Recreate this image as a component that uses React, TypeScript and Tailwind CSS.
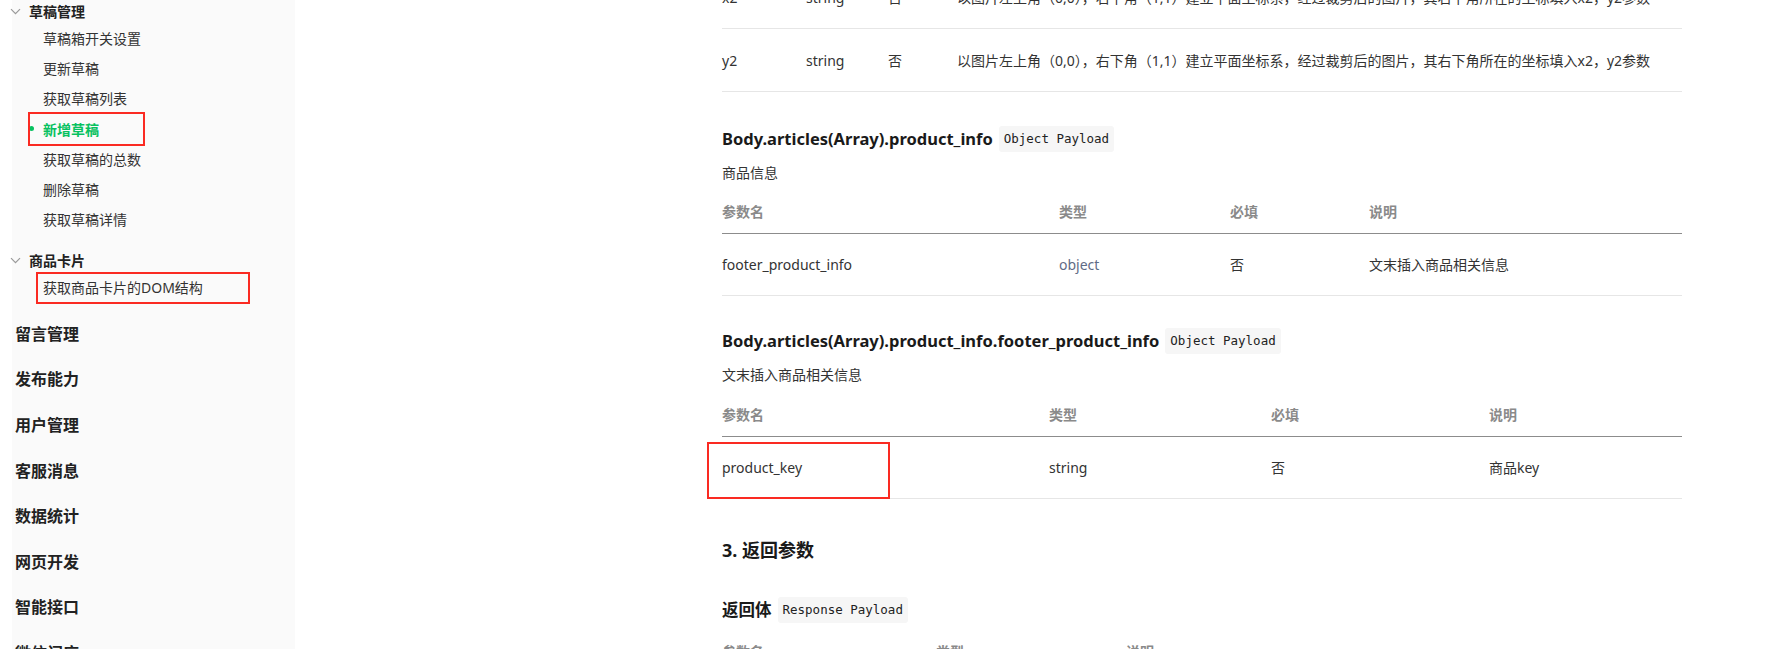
import React from 'react';

const subDrafts = ['草稿箱开关设置', '更新草稿', '获取草稿列表', '新增草稿', '获取草稿的总数', '删除草稿', '获取草稿详情'];
const topItems = ['留言管理', '发布能力', '用户管理', '客服消息', '数据统计', '网页开发', '智能接口', '微信门店'];

const Chevron = () => (
  <svg width="11" height="7" viewBox="0 0 11 7" className="shrink-0">
    <path d="M1 1.2l4.5 4.5 4.5-4.5" fill="none" stroke="#9a9a9a" strokeWidth="1.2" />
  </svg>
);

const RedBox = ({ className }: { className: string }) => (
  <div className={`pointer-events-none absolute border-2 border-[#fa2a22] ${className}`} />
);

const Badge = ({ children }: { children: React.ReactNode }) => (
  <span className="ml-[6px] inline-flex h-[26px] items-center rounded-[3px] bg-[#f6f6f6] px-[5px] font-['DejaVu_Sans_Mono',monospace] text-[12.5px] font-normal text-[#222]">
    {children}
  </span>
);

type Cell = { text: string; className?: string };

const Table = ({
  cols,
  head,
  rows,
  className = '',
  rowHeight = 'h-[62px]',
  highlightFirst = false,
}: {
  cols: string[];
  head?: string[];
  rows: Cell[][];
  className?: string;
  rowHeight?: string;
  highlightFirst?: boolean;
}) => (
  <div className={`w-[960px] ${className}`}>
    {head && (
      <div className="flex h-[44px] items-center border-b border-[#8c8c8c] text-[14px] font-semibold text-[#8a8a8a]">
        {head.map((h, i) => (
          <div key={i} className={cols[i]}>
            {h}
          </div>
        ))}
      </div>
    )}
    {rows.map((r, ri) => (
      <div key={ri} className={`relative flex items-center border-b border-[#e6e6e6] text-[14px] text-[#333] ${rowHeight}`}>
        {r.map((c, i) => (
          <div key={i} className={`${cols[i]} ${c.className ?? ''}`}>
            {c.text}
          </div>
        ))}
        {highlightFirst && <RedBox className="left-[-15px] top-[5px] h-[57px] w-[183px]" />}
      </div>
    ))}
  </div>
);

const desc = '以图片左上角（0,0），右下角（1,1）建立平面坐标系，经过裁剪后的图片，其右下角所在的坐标填入x2，y2参数';

export default function App() {
  return (
    <div className="flex h-[649px] w-[1774px] overflow-hidden bg-white font-['Noto_Sans','Noto_Sans_CJK_SC',sans-serif] text-[#333]">
      {/* sidebar */}
      <aside className="w-[295px] shrink-0 pl-[12px]">
        <div className="h-full bg-[#fafafa]">
          <div className="flex h-[23px] items-center gap-[8px] text-[14px] font-bold text-[#222]">
            <span className="-ml-[2px] flex">
              <Chevron />
            </span>
            <span>草稿管理</span>
          </div>
          {subDrafts.map((s) =>
            s === '新增草稿' ? (
              <div key={s} className="relative flex h-[30.3px] items-center pl-[31px] text-[14px] font-bold text-[#07c160]">
                <span className="absolute left-[17px] top-[12.5px] h-[5px] w-[5px] rounded-full bg-[#07c160]" />
                {s}
                <RedBox className="left-[16px] top-[-2px] h-[34px] w-[117px]" />
              </div>
            ) : (
              <div key={s} className="flex h-[30.3px] items-center pl-[31px] text-[14px]">
                {s}
              </div>
            )
          )}
          <div className="mt-[13px] flex h-[24px] items-center gap-[8px] text-[14px] font-bold text-[#222]">
            <span className="-ml-[2px] flex">
              <Chevron />
            </span>
            <span>商品卡片</span>
          </div>
          <div className="relative flex h-[30px] items-center pl-[31px] text-[14px]">
            获取商品卡片的DOM结构
            <RedBox className="left-[24px] top-0 h-[32px] w-[214px]" />
          </div>
          <div className="mt-[9px]">
            {topItems.map((t) => (
              <div key={t} className="flex h-[45.6px] items-center pl-[3px] text-[16px] font-bold text-[#222]">
                {t}
              </div>
            ))}
          </div>
        </div>
      </aside>

      {/* content */}
      <main className="ml-[427px] w-[960px] shrink-0">
        <Table
          className="-mt-[34px]"
          rowHeight="h-[63px]"
          cols={['w-[84px]', 'w-[82px]', 'w-[69px]', 'flex-1']}
          rows={[
            [{ text: 'x2' }, { text: 'string' }, { text: '否' }, { text: desc }],
            [{ text: 'y2' }, { text: 'string' }, { text: '否' }, { text: desc }],
          ]}
        />

        <h3 className="mt-[34px] flex h-[26px] items-center text-[16.5px] font-bold text-[#1a1a1a]">
          Body.articles(Array).product_info
          <Badge>Object Payload</Badge>
        </h3>
        <p className="mt-[10px] flex h-[20px] items-center text-[14px]">商品信息</p>

        <Table
          className="mt-[8px]"
          cols={['w-[337px]', 'w-[171px]', 'w-[139px]', 'flex-1']}
          head={['参数名', '类型', '必填', '说明']}
          rows={[
            [
              { text: 'footer_product_info' },
              { text: 'object', className: 'text-[#5f6b86]' },
              { text: '否' },
              { text: '文末插入商品相关信息' },
            ],
          ]}
        />

        <h3 className="mt-[32px] flex h-[26px] items-center text-[16.5px] font-bold text-[#1a1a1a]">
          Body.articles(Array).product_info.footer_product_info
          <Badge>Object Payload</Badge>
        </h3>
        <p className="mt-[10px] flex h-[20px] items-center text-[14px]">文末插入商品相关信息</p>

        <Table
          className="mt-[9px]"
          cols={['w-[327px]', 'w-[222px]', 'w-[218px]', 'flex-1']}
          head={['参数名', '类型', '必填', '说明']}
          highlightFirst
          rows={[[{ text: 'product_key' }, { text: 'string' }, { text: '否' }, { text: '商品key' }]]}
        />

        <h2 className="mt-[37px] flex h-[28px] items-center text-[18px] font-bold text-[#1a1a1a]">3. 返回参数</h2>

        <h3 className="mt-[33px] flex h-[26px] items-center text-[16.5px] font-bold text-[#1a1a1a]">
          返回体
          <Badge>Response Payload</Badge>
        </h3>

        <Table
          className="mt-[7px]"
          cols={['w-[214px]', 'w-[190px]', 'flex-1']}
          head={['参数名', '类型', '说明']}
          rows={[]}
        />
      </main>
    </div>
  );
}
